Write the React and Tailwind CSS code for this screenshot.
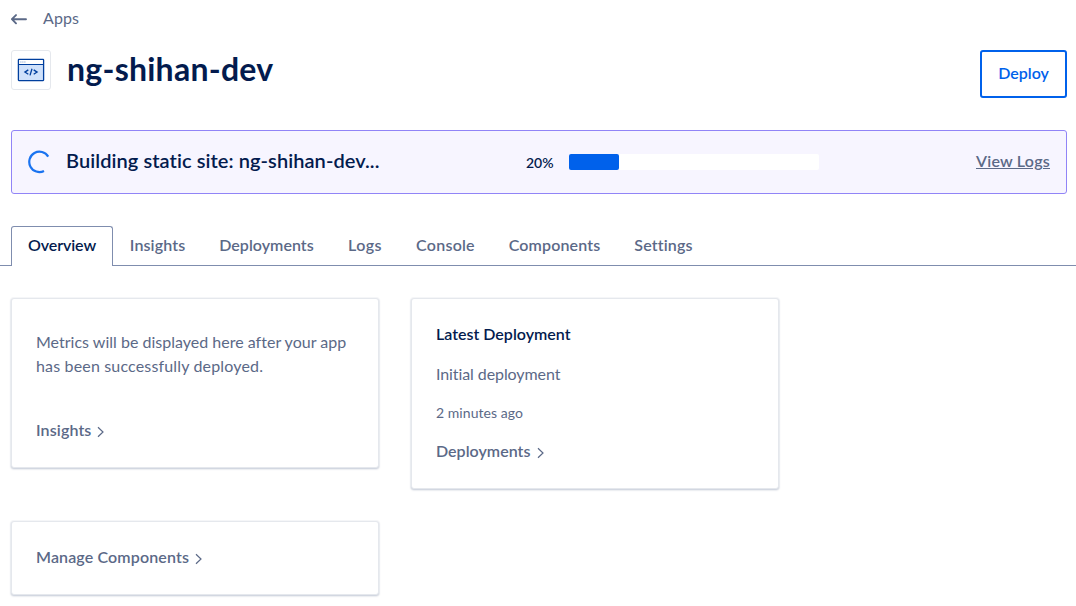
const tabs = [
  { label: "Insights", style: "w-[89px] tracking-[0.12px]" },
  { label: "Deployments", style: "w-[129px] tracking-[0.03px]" },
  { label: "Logs", style: "w-[68px] tracking-[0.4px]" },
  { label: "Console", style: "w-[93px] tracking-[0.24px]" },
  { label: "Components", style: "w-[125px] tracking-[0.15px]" },
  { label: "Settings", style: "w-[93px] tracking-[0.15px]" },
];

function BackArrow() {
  return (
    <svg className="size-4 shrink-0" viewBox="0 0 16 16" fill="none" stroke="#5b6987" strokeWidth="1.9" strokeLinecap="round" strokeLinejoin="round">
      <path d="M15 8.2H1.2M5 4.1L.9 8.2L5 12.3" />
    </svg>
  );
}

function SiteIcon() {
  return (
    <svg className="h-6 w-7" viewBox="0 0 28 24" fill="none">
      <rect x="1.5" y="1.5" width="25" height="21" fill="#cfe1fb" />
      <rect x="1.5" y="1.5" width="25" height="5" fill="#fff" />
      <rect x="1.4" y="1.4" width="25.2" height="21.2" rx=".5" stroke="#003f9e" strokeWidth="1.3" />
      <path d="M1.5 6.5h25" stroke="#003f9e" />
      <path d="M3.4 4h1M5.4 4h1M7.4 4h1" stroke="#6f93c8" />
      <path d="M11.3 11.9L7.9 14.1L11.3 16.3M16.7 11.9L20.1 14.1L16.7 16.3M15 10.8L13 17.4" stroke="#003f9e" strokeWidth="1.3" />
    </svg>
  );
}

function Spinner() {
  return (
    <svg className="-ml-px size-6 shrink-0" viewBox="0 0 24 24" fill="none" stroke="#1a73f0" strokeWidth="2.2" strokeLinecap="butt">
      <path d="M21.2 6.6A10.2 10.2 0 1 0 17 21" />
    </svg>
  );
}

function MoreLink({ children, className }) {
  return (
    <a className={`flex items-center text-base font-semibold text-[#5b6987] ${className}`}>
      {children}
      <svg className="mt-[3px] ml-[6px] h-3 w-2" viewBox="0 0 8 12" fill="none" stroke="#5b6987" strokeWidth="1.2">
        <path d="M1 1.2L6 6L1 10.8" />
      </svg>
    </a>
  );
}

function Card({ children, className }) {
  return (
    <section className={`w-[368px] rounded-[3px] border border-[#e5e8ed] bg-white px-6 shadow-[0_0_0_1px_rgba(229,232,237,0.3),0_1px_2px_0_rgba(3,27,78,0.28)] ${className}`}>
      {children}
    </section>
  );
}

export default function App() {
  return (
    <main className="h-[606px] overflow-hidden bg-white font-['Lato','Liberation_Sans',sans-serif] text-base leading-6 whitespace-nowrap text-[#5b6987] [font-variant-ligatures:none]">
      <nav className="flex h-[38px] items-center gap-4 pl-[11px]">
        <BackArrow />
        <a className="pb-0.5 tracking-[0.1px]">Apps</a>
      </nav>

      <header className="mt-3 mr-[9px] ml-[11px] flex h-12 items-start">
        <div className="flex size-10 items-center justify-center rounded-[3px] border border-[#e5e8ed]">
          <SiteIcon />
        </div>
        <h1 className="ml-4 text-[32px] leading-[38px] font-bold tracking-[0.25px] text-[#031b4e]">ng-shihan-dev</h1>
        <button className="ml-auto h-12 w-[87px] rounded-[3px] border-2 border-[#0061eb] pb-0.5 font-semibold text-[#0061eb]">Deploy</button>
      </header>

      <section className="mt-8 mr-[9px] ml-[11px] flex h-16 items-center rounded-[3px] border border-[#9184f7] bg-[#f7f5ff] px-4">
        <Spinner />
        <h2 className="ml-[15px] w-[460px] pb-1 text-xl font-semibold tracking-[0.07px] text-[#031b4e]">Building static site: ng-shihan-dev...</h2>
        <span className="mt-[2px] w-[43px] text-sm font-semibold text-[#031b4e]">20%</span>
        <div className="h-4 w-[250px] rounded-[2px] bg-white">
          <div className="h-4 w-1/5 rounded-[2px] bg-[#0061eb]" />
        </div>
        <a className="ml-auto pb-0.5 font-semibold tracking-[0.23px] underline">View Logs</a>
      </section>

      <div className="mt-8 flex h-10 font-semibold">
        <span className="w-[11px] border-b border-[#7f8dae]" />
        <a className="w-[102px] rounded-t-[3px] border border-b-0 border-[#7f8dae] pt-1.5 text-center tracking-[-0.08px] text-[#031b4e]">Overview</a>
        {tabs.map(({ label, style }) => (
          <a key={label} className={`border-b border-[#7f8dae] pt-[7px] text-center ${style}`}>{label}</a>
        ))}
        <span className="flex-1 border-b border-[#7f8dae]" />
      </div>

      <div className="mt-8 ml-[11px] flex items-start gap-8">
        <div className="flex flex-col gap-[53px]">
          <Card className="h-[170px] pt-[31px]">
            <p className="tracking-[0.01px]">
              Metrics will be displayed here after your app
              <br />
              <span className="tracking-[0.16px]">has been successfully deployed.</span>
            </p>
            <MoreLink className="mt-10 tracking-[0.12px]">Insights</MoreLink>
          </Card>
          <Card className="h-[74px] pt-[23px]">
            <MoreLink className="tracking-[0.13px]">Manage Components</MoreLink>
          </Card>
        </div>
        <Card className="h-[191px] pt-[23px]">
          <h3 className="font-semibold text-[#031b4e]">Latest Deployment</h3>
          <p className="mt-4 tracking-[-0.09px]">Initial deployment</p>
          <p className="mt-[15px] text-sm leading-6 tracking-[0.05px]">2 minutes ago</p>
          <MoreLink className="mt-[14px] tracking-[0.03px]">Deployments</MoreLink>
        </Card>
      </div>
    </main>
  );
}
